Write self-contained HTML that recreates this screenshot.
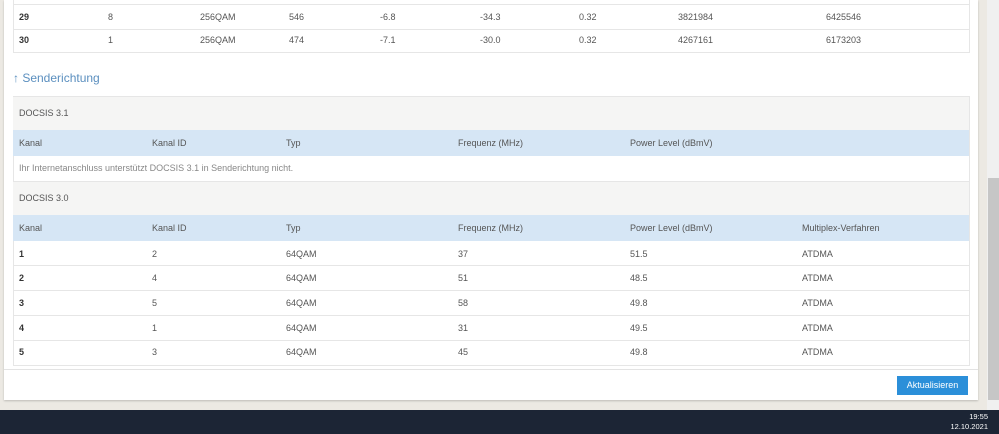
<!DOCTYPE html><html><head><style>
body{margin:0;width:999px;height:434px;background:#ece9e3;position:relative;overflow:hidden;font-family:"Liberation Sans",sans-serif;font-size:9px;color:#555}
.card{position:absolute;left:4px;top:0;width:974px;height:400px;background:#fff;box-shadow:0 1px 2px rgba(0,0,0,.2)}
.a{position:absolute}
.row{position:absolute;left:13px;width:956px;border-bottom:1px solid #e6e6e6}
.row span{position:absolute;top:0}
.sb{position:absolute;left:987px;top:0;width:12px;height:410px;background:#f0f0f0}
.tb{position:absolute;left:0;top:410px;width:999px;height:24px;background:#1c2535;color:#fff;font-size:7.5px;text-align:right}
b{color:#333}
</style></head><body>
<div class="card">
</div>
<div class="a" style="left:13px;top:0;width:955px;height:52px;border:1px solid #e6e6e6;border-top:none"></div>
<div class="row" style="top:4px;height:24px;line-height:24px;border-top:1px solid #e6e6e6"><span style="left:6px"><b>29</b></span><span style="left:95px">8</span><span style="left:187px">256QAM</span><span style="left:276px">546</span><span style="left:367px">-6.8</span><span style="left:467px">-34.3</span><span style="left:566px">0.32</span><span style="left:665px">3821984</span><span style="left:813px">6425546</span></div>
<div class="row" style="top:29px;height:23px;line-height:23px"><span style="left:6px"><b>30</b></span><span style="left:95px">1</span><span style="left:187px">256QAM</span><span style="left:276px">474</span><span style="left:367px">-7.1</span><span style="left:467px">-30.0</span><span style="left:566px">0.32</span><span style="left:665px">4267161</span><span style="left:813px">6173203</span></div>
<div class="a" style="left:13px;top:71px;font-size:12px;color:#5b8fbf">↑ Senderichtung</div>
<div class="a" style="left:13px;top:96px;width:955px;height:268px;border:1px solid #e6e6e6"></div>
<div class="row" style="top:97px;height:33px;line-height:33px;background:#f5f5f4;border:none"><span style="left:6px">DOCSIS 3.1</span></div>
<div class="row" style="top:130px;height:26px;line-height:26px;background:#d6e6f5;border:none"><span style="left:6px">Kanal</span><span style="left:139px">Kanal ID</span><span style="left:273px">Typ</span><span style="left:445px">Frequenz (MHz)</span><span style="left:617px">Power Level (dBmV)</span></div>
<div class="row" style="top:156px;height:25px;line-height:25px;color:#888"><span style="left:6px">Ihr Internetanschluss unterstützt DOCSIS 3.1 in Senderichtung nicht.</span></div>
<div class="row" style="top:182px;height:33px;line-height:33px;background:#f5f5f4;border:none"><span style="left:6px">DOCSIS 3.0</span></div>
<div class="row" style="top:215px;height:26px;line-height:26px;background:#d6e6f5;border:none"><span style="left:6px">Kanal</span><span style="left:139px">Kanal ID</span><span style="left:273px">Typ</span><span style="left:445px">Frequenz (MHz)</span><span style="left:617px">Power Level (dBmV)</span><span style="left:789px">Multiplex-Verfahren</span></div>
<div class="row" style="top:241px;height:24px;line-height:26px"><span style="left:6px"><b>1</b></span><span style="left:139px">2</span><span style="left:273px">64QAM</span><span style="left:445px">37</span><span style="left:617px">51.5</span><span style="left:789px">ATDMA</span></div>
<div class="row" style="top:266px;height:24px;line-height:24px"><span style="left:6px"><b>2</b></span><span style="left:139px">4</span><span style="left:273px">64QAM</span><span style="left:445px">51</span><span style="left:617px">48.5</span><span style="left:789px">ATDMA</span></div>
<div class="row" style="top:291px;height:24px;line-height:24px"><span style="left:6px"><b>3</b></span><span style="left:139px">5</span><span style="left:273px">64QAM</span><span style="left:445px">58</span><span style="left:617px">49.8</span><span style="left:789px">ATDMA</span></div>
<div class="row" style="top:316px;height:24px;line-height:24px"><span style="left:6px"><b>4</b></span><span style="left:139px">1</span><span style="left:273px">64QAM</span><span style="left:445px">31</span><span style="left:617px">49.5</span><span style="left:789px">ATDMA</span></div>
<div class="row" style="top:341px;height:23px;line-height:23px;border:none"><span style="left:6px"><b>5</b></span><span style="left:139px">3</span><span style="left:273px">64QAM</span><span style="left:445px">45</span><span style="left:617px">49.8</span><span style="left:789px">ATDMA</span></div>
<div class="a" style="left:4px;top:369px;width:974px;border-top:1px solid #e3e3e3"></div>
<div class="a" style="left:897px;top:376px;width:71px;height:19px;background:#2b8fd9;color:#fff;line-height:19px;text-align:center;font-size:9px">Aktualisieren</div>
<div class="sb"><div style="position:absolute;left:1px;top:178px;width:11px;height:222px;background:#c6c6c6"></div></div>
<div class="tb"><div style="padding:2px 11px 0 0;line-height:10px">19:55<br>12.10.2021</div></div>
</body></html>
